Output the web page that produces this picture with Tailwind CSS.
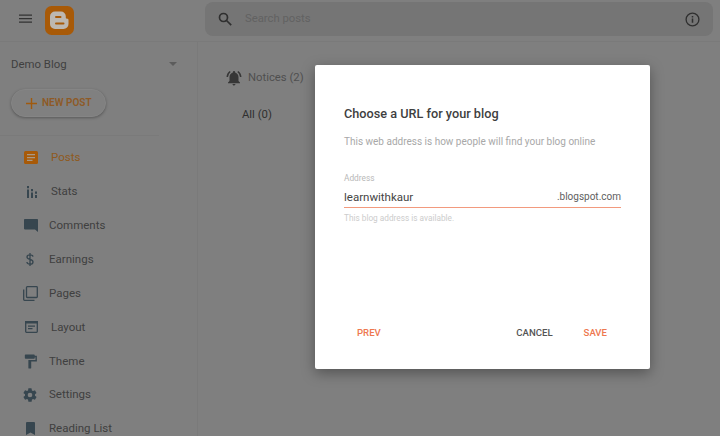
<!DOCTYPE html>
<html lang="en">
<head>
  <meta charset="UTF-8" />
  <title>Blogger</title>
  <script src="https://cdn.jsdelivr.net/npm/@tailwindcss/browser@4"></script>
</head>
<body class="relative h-[436px] w-[720px] overflow-hidden bg-[#7f7f7f] font-['Roboto',sans-serif] text-[#3c3c3c]">

  <!-- top bar -->
  <header class="flex h-[42px] items-start border-b border-[#7a7a7a]">
    <div class="flex w-[198px] items-center pl-[19px] pt-[6px]">
      <svg class="h-[13px] w-[13px]" viewBox="0 0 13 13" fill="#333"><path d="M0 .4h13v1.300H0zM0 3.900h13v1.300H0zM0 7.400h13v1.300H0z"/></svg>
      <svg class="ml-[13px] h-[29px] w-[29px]" viewBox="0 0 29 29">
        <rect width="29" height="29" rx="6.5" fill="#a85a08"/>
        <path d="M10 5.500h6a4.800 4.800 0 0 1 4.800 4.800v1.200c0 .8.5 1.200 1.300 1.200.9 0 1.400.5 1.400 1.300v4a5 5 0 0 1-5 5H10a5 5 0 0 1-5-5v-7.500a5 5 0 0 1 5-5z" fill="#bdb8b1"/>
        <rect x="10" y="10" width="6.500" height="2" rx="1" fill="#a85a08"/>
        <rect x="10" y="16.500" width="9.500" height="2" rx="1" fill="#a85a08"/>
      </svg>
    </div>
    <div class="mt-[2px] ml-[7px] flex h-[34px] w-[508px] items-center rounded-lg bg-[#757575] pl-[13px] pr-[13px]">
      <svg class="h-[14px] w-[14px]" viewBox="0 0 14 14" fill="none" stroke="#2f2f2f" stroke-width="1.7"><circle cx="5.500" cy="5.500" r="4"/><path d="M8.500 8.500l4.700 4.700"/></svg>
      <span class="ml-[13px] flex-1 pt-px text-[11.300px] text-[#626262]">Search posts</span>
      <svg class="h-[15px] w-[15px]" viewBox="0 0 15 15" fill="none" stroke="#2f2f2f" stroke-width="1.300"><circle cx="7.500" cy="7.500" r="6.400"/><path stroke-width="1.500" d="M7.500 6.600v4.200M7.500 3.900v1.500"/></svg>
    </div>
  </header>

  <div class="flex">
    <!-- sidebar -->
    <aside class="h-[394px] w-[198px] border-r border-[#7a7a7a]">
      <div class="flex items-center justify-between pl-[11px] pr-[20px] pt-[15px]">
        <span class="text-[11.400px] leading-[14px] text-[#3f3f3f]">Demo Blog</span>
        <span class="h-0 w-0 border-x-[4px] border-t-[4px] border-x-transparent border-t-[#5c5c5c]"></span>
      </div>
      <div class="ml-[11px] mt-[18px] flex h-[28px] w-[95px] items-center rounded-full border border-[#858585] bg-[#808080] pl-[14px] shadow-[0_1px_3px_rgba(0,0,0,0.3)]">
        <svg class="h-[11px] w-[11px]" viewBox="0 0 11 11" fill="#a05a0e"><path d="M4.800 0h1.400v4.800H11v1.400H6.200V11H4.800V6.200H0V4.800h4.800z"/></svg>
        <span class="ml-[5px] whitespace-nowrap text-[10px] font-semibold leading-none text-[#8e5a26]">NEW POST</span>
      </div>
      <div class="mt-[18px] mr-[38px] border-t border-[#7a7a7a]"></div>

      <nav class="mt-[5px] flex flex-col text-[11.500px] text-[#404040]">
        <a class="flex h-[33.875px] items-center">
          <svg class="ml-[24px] h-[13px] w-[14px]" viewBox="0 0 14 13"><rect width="14" height="13" rx="1.500" fill="#a85a08"/><path d="M3 3h8v1.300H3zM3 5.900h8v1.300H3zM3 8.700h5.500V10H3z" fill="#a89a88"/></svg>
          <span class="ml-[13px] text-[#8f5a20]">Posts</span>
        </a>
        <a class="flex h-[33.875px] items-center">
          <svg class="ml-[27px] h-[12px] w-[10px]" viewBox="0 0 10 12" fill="#37464f"><path d="M0 0h2v2.200H0zM0 3.400h2V12H0zM4 3h2v2.200H4zM4 6.400h2V12H4zM8 5.600h2v2.200H8zM8 9h2v3H8z"/></svg>
          <span class="ml-[14px]">Stats</span>
        </a>
        <a class="flex h-[33.875px] items-center">
          <svg class="ml-[24px] h-[13px] w-[14px]" viewBox="0 0 14 13" fill="#37464f"><path d="M.8 0h12.400c.5 0 .8.4.8.8V13l-3-2.600H.8a.8.8 0 0 1-.8-.8V.8C0 .4.3 0 .8 0z"/></svg>
          <span class="ml-[11px]">Comments</span>
        </a>
        <a class="flex h-[33.875px] items-center">
          <svg class="ml-[26px] h-[13px] w-[8px]" viewBox="0 0 8 13" fill="none" stroke="#37464f" stroke-width="1.300"><path d="M7 3.700C6.800 2.500 5.600 1.900 4 1.900c-1.700 0-3 .8-3 2 0 1.400 1.300 2 3 2.500 1.800.5 3 1.100 3 2.500 0 1.200-1.300 2.200-3 2.200-1.700 0-2.900-.8-3.100-2.100M4 0v13"/></svg>
          <span class="ml-[15px]">Earnings</span>
        </a>
        <a class="flex h-[33.875px] items-center">
          <svg class="ml-[23px] h-[15px] w-[15px]" viewBox="0 0 15 15" fill="none" stroke="#37464f" stroke-width="1.300"><rect x="3.500" y=".7" width="10.800" height="10.800" rx=".8"/><path d="M.7 3.500v10c0 .4.4.8.8.8h10"/></svg>
          <span class="ml-[11px]">Pages</span>
        </a>
        <a class="flex h-[33.875px] items-center">
          <svg class="ml-[25px] h-[12px] w-[13px]" viewBox="0 0 13 12" fill="none" stroke="#37464f" stroke-width="1.300"><rect x=".7" y=".7" width="11.600" height="10.600" rx=".8"/><path fill="#37464f" stroke="none" d="M0 0h13v2.500H0zM3 4.500h7v1.200H3zM3 7h4.500v1.200H3z"/></svg>
          <span class="ml-[13px]">Layout</span>
        </a>
        <a class="flex h-[33.875px] items-center">
          <svg class="ml-[22px] h-[17px] w-[17px]" viewBox="0 0 24 24" fill="#37464f"><path d="M18 4V3c0-.55-.45-1-1-1H5c-.55 0-1 .45-1 1v4c0 .55.45 1 1 1h12c.55 0 1-.45 1-1V6h1v4H9v11c0 .55.45 1 1 1h2c.55 0 1-.45 1-1v-9h8V4h-3z"/></svg>
          <span class="ml-[10px]">Theme</span>
        </a>
        <a class="flex h-[33.875px] items-center">
          <svg class="ml-[22px] h-[16px] w-[16px]" viewBox="0 0 24 24" fill="#37464f"><path d="M19.400 13c.04-.3.1-.7.1-1s-.06-.7-.1-1l2.100-1.600c.2-.15.25-.4.12-.64l-2-3.460c-.12-.22-.39-.3-.61-.22l-2.490 1c-.52-.4-1.080-.73-1.690-.98l-.38-2.650A.49.49 0 0 0 14 2h-4c-.25 0-.46.18-.49.42l-.38 2.650c-.61.25-1.170.59-1.690.98l-2.490-1a.5.5 0 0 0-.61.22l-2 3.460c-.13.22-.07.49.12.64L4.570 11c-.04.32-.07.650-.07 1s.03.680.07 1l-2.110 1.650c-.19.150-.24.420-.12.640l2 3.460c.12.220.39.300.61.220l2.490-1c.52.4 1.080.730 1.690.980l.38 2.650c.03.240.24.420.49.420h4c.25 0 .46-.18.49-.42l.38-2.650c.61-.25 1.170-.59 1.690-.98l2.490 1c.23.090.49 0 .61-.22l2-3.460c.12-.22.070-.49-.12-.64L19.400 13zM12 15.500a3.500 3.500 0 1 1 0-7 3.500 3.500 0 0 1 0 7z"/></svg>
          <span class="ml-[11px]">Settings</span>
        </a>
        <a class="flex h-[33.875px] items-center">
          <svg class="ml-[26px] h-[13px] w-[9px]" viewBox="0 0 9 13" fill="#37464f"><path d="M1 0h7a1 1 0 0 1 1 1v12L4.500 10.500 0 13V1a1 1 0 0 1 1-1z"/></svg>
          <span class="ml-[14px]">Reading List</span>
        </a>
      </nav>
    </aside>

    <!-- notices column -->
    <main class="pl-[27px] pt-[27px] text-[11.300px]">
      <div class="flex items-center text-[#4f4f4f]">
        <svg class="h-[18px] w-[18px]" viewBox="0 0 24 24" fill="#363636"><path d="M7.580 4.080 6.150 2.650C3.750 4.480 2.170 7.300 2.030 10.500h2a9.500 9.500 0 0 1 3.550-6.420zM19.970 10.500h2c-.15-3.200-1.730-6.020-4.120-7.850l-1.420 1.430a9.500 9.500 0 0 1 3.540 6.420zM18 11c0-3.070-1.640-5.640-4.500-6.320V4a1.500 1.500 0 0 0-3 0v.680C7.630 5.360 6 7.920 6 11v5l-2 2v1h16v-1l-2-2v-5zM12 22c.140 0 .270-.01.400-.04a2.030 2.030 0 0 0 1.440-1.180c.1-.24.150-.5.150-.78h-4c.010 1.100.9 2 2.010 2z"/></svg>
        <span class="ml-[5px] whitespace-nowrap">Notices (2)</span>
      </div>
      <div class="ml-[17px] mt-[20px] text-[#303030]">All (0)</div>
    </main>
  </div>

  <!-- dialog -->
  <div class="absolute left-[315px] top-[65px] flex h-[304px] w-[335px] flex-col rounded-[2px] bg-white px-[29px] shadow-[0_4px_14px_rgba(0,0,0,0.35)]">
    <h2 class="mt-[41px] text-[12.700px] font-medium leading-[16px] text-[#3f3f3f]">Choose a URL for your blog</h2>
    <p class="mt-[13px] text-[10px] leading-[14px] text-[#a8a8a8]">This web address is how people will find your blog online</p>
    <label class="mt-[24px] text-[8.300px] leading-[10px] text-[#b8b8b8]">Address</label>
    <div class="mt-[7px] flex items-end justify-between pb-[3px] leading-[14px]">
      <span class="text-[11.500px] text-[#444]">learnwithkaur</span>
      <span class="text-[10px] text-[#606060]">.blogspot.com</span>
    </div>
    <div class="h-px bg-[#f29a7e]"></div>
    <p class="mt-[5px] text-[8.250px] leading-[10px] text-[#cccccc]">This blog address is available.</p>
    <div class="mt-auto mb-[30px] flex items-center text-[9.600px] font-medium leading-[12px]">
      <button class="ml-[13px] text-[#ee7850]">PREV</button>
      <button class="ml-auto text-[#555]">CANCEL</button>
      <button class="ml-[31px] mr-[14px] text-[#ee7850]">SAVE</button>
    </div>
  </div>
</body>
</html>
